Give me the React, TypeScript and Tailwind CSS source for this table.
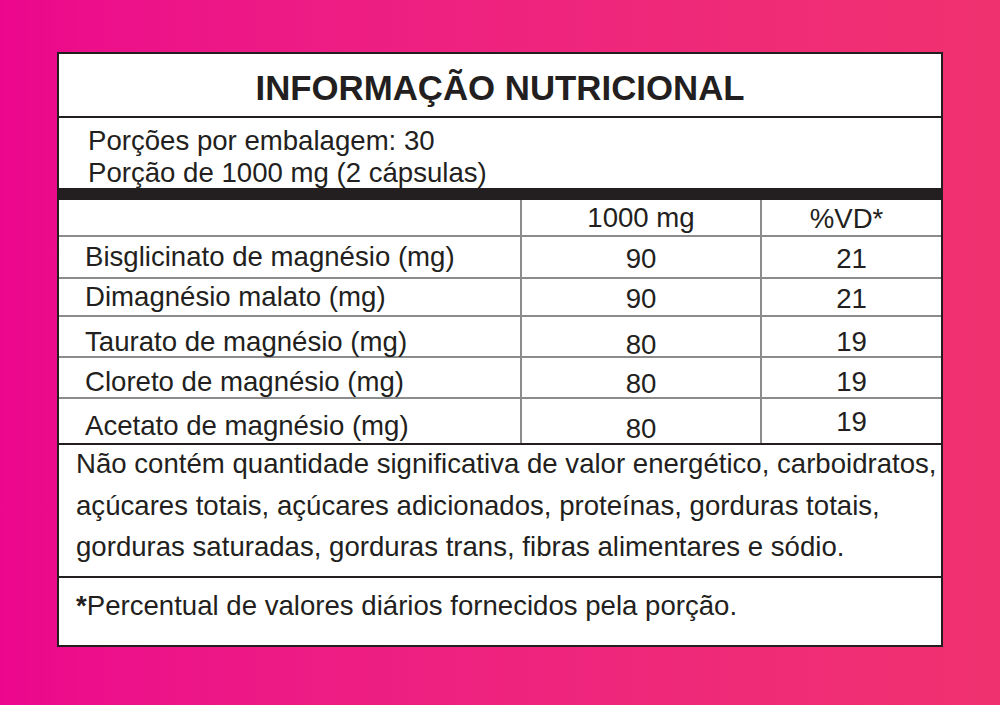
import React from "react";

type Row = {
  label: string;
  a: string;
  b: string;
  h: string;
  lp: string;
  ap: string;
  bp: string;
  last?: boolean;
};

const rows: Row[] = [
  { label: "Bisglicinato de magnésio (mg)", a: "90", b: "21", h: "h-[42px]", lp: "pt-0", ap: "pt-[4px]", bp: "pt-[4px]" },
  { label: "Dimagnésio malato (mg)", a: "90", b: "21", h: "h-[38px]", lp: "pt-0", ap: "pt-[4px]", bp: "pt-[4px]" },
  { label: "Taurato de magnésio (mg)", a: "80", b: "19", h: "h-[41px]", lp: "pt-[8px]", ap: "pt-[14px]", bp: "pt-[8px]" },
  { label: "Cloreto de magnésio (mg)", a: "80", b: "19", h: "h-[41px]", lp: "pt-[8px]", ap: "pt-[12px]", bp: "pt-[8px]" },
  { label: "Acetato de magnésio (mg)", a: "80", b: "19", h: "h-[44px]", lp: "pt-[10px]", ap: "pt-[16px]", bp: "pt-[2px]", last: true },
];

export default function App() {
  return (
    <div
      className="w-[1000px] h-[705px] bg-linear-to-r from-[#ec068d] to-[#f0316f] pl-[57px] pt-[52px] text-[#231f20]"
      style={{ fontFamily: '"Liberation Sans", Arial, sans-serif' }}
    >
      <div className="w-[886px] h-[595px] border-2 border-[#231f20] bg-white flex flex-col">
        {/* Title */}
        <div className="h-[64px] border-b-2 border-[#231f20] pt-[15px] text-center">
          <div className="text-[34.8px] leading-[38px] font-bold">INFORMAÇÃO NUTRICIONAL</div>
        </div>
        {/* Serving */}
        <div className="h-[70px] pl-[29px] pt-[7px] text-[27.6px] leading-[32px]">
          <div>Porções por embalagem: 30</div>
          <div>Porção de 1000 mg (2 cápsulas)</div>
        </div>
        {/* Thick bar */}
        <div className="h-[12px] bg-[#231f20]" />
        {/* Table header */}
        <div className="h-[37px] grid grid-cols-[461px_240px_1fr] border-b-2 border-[#8c8c8c] text-[27.6px] leading-none">
          <div />
          <div className="border-l-2 border-[#8c8c8c] flex items-center justify-center">1000 mg</div>
          <div className="border-l-2 border-[#8c8c8c] flex items-center justify-center pr-[10px] pt-[2px]">%VD*</div>
        </div>
        {rows.map((r) => (
          <div
            key={r.label}
            className={`${r.h} grid grid-cols-[461px_240px_1fr] text-[27.6px] leading-none ${
              r.last ? "" : "border-b-2 border-[#8c8c8c]"
            }`}
          >
            <div className={`flex items-center pl-[26px] ${r.lp}`}>{r.label}</div>
            <div className={`border-l-2 border-[#8c8c8c] flex items-center justify-center ${r.ap}`}>{r.a}</div>
            <div className={`border-l-2 border-[#8c8c8c] flex items-center justify-center ${r.bp}`}>{r.b}</div>
          </div>
        ))}
        {/* Notes */}
        <div className="h-[135px] border-t-2 border-b-2 border-[#231f20] pl-[17px] text-[27.6px] leading-[41.5px] whitespace-nowrap">
          <div className="-mt-[2px]">
            Não contém quantidade significativa de valor energético, carboidratos,
            <br />
            açúcares totais, açúcares adicionados, proteínas, gorduras totais,
            <br />
            gorduras saturadas, gorduras trans, fibras alimentares e sódio.
          </div>
        </div>
        {/* Footnote */}
        <div className="flex-1 pl-[17px] pt-[13px] text-[27.6px] leading-[30px]">
          <span className="font-bold">*</span>Percentual de valores diários fornecidos pela porção.
        </div>
      </div>
    </div>
  );
}
